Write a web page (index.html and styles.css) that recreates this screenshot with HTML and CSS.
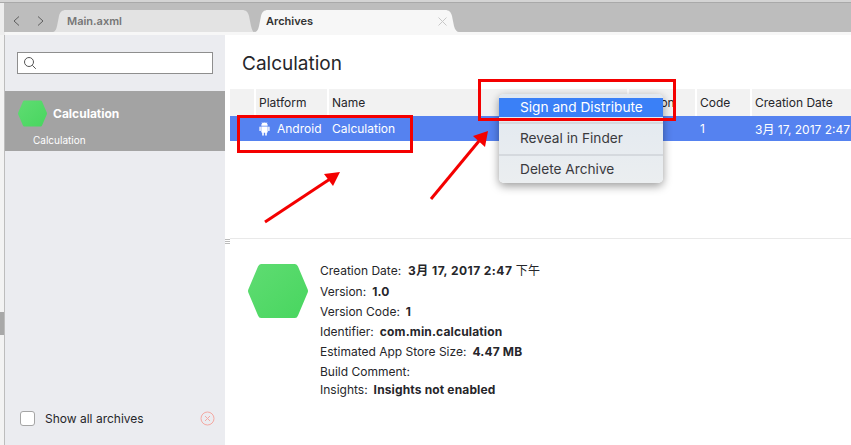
FILE: index.html
```html
<!DOCTYPE html>
<html>
<head>
<meta charset="utf-8">
<link rel="stylesheet" href="styles.css">
</head>
<body>
<div class="app">
  <div class="topline"></div>
  <div class="tabbar">
    <div class="nav">
      <svg width="12" height="12" viewBox="0 0 12 12"><path d="M8 1.500 3 6 8 10.500" class="chev"/></svg>
      <svg width="12" height="12" viewBox="0 0 12 12"><path d="M4 1.500 9 6 4 10.500" class="chev"/></svg>
    </div>
    <div class="tab tab-off">Main.axml</div>
    <div class="tab tab-on"><span>Archives</span>
      <svg width="9" height="9" viewBox="0 0 9 9"><path d="M.5 .5 8.500 8.500M8.500 .5 .5 8.500" class="close"/></svg>
    </div>
  </div>
  <div class="strip"></div>
  <div class="body">
    <div class="gutter"><div class="thumb"></div></div>
    <aside class="sidebar">
      <div class="search">
        <svg width="14" height="14" viewBox="0 0 14 14"><circle cx="6" cy="6" r="4.500" class="lens"/><path d="M9.300 9.300 12.800 12.800" class="lens"/></svg>
      </div>
      <div class="selected">
        <div class="sel-top">
          <svg class="hex-small" width="29" height="27" viewBox="0 0 60 54"><defs><linearGradient id="g1" x1="0" y1="0" x2="1" y2="1"><stop offset="0" stop-color="#5fdc72"/><stop offset="1" stop-color="#48d65f"/></linearGradient></defs><path d="M13 0H47Q49 0 50 2.500L59.500 25Q60.500 27 59.500 29L50 51.500Q49 54 47 54H13Q11 54 10 51.500L.5 29Q-.5 27 .5 25L10 2.500Q11 0 13 0Z" fill="url(#g1)"/></svg>
          <span class="sel-name">Calculation</span>
        </div>
        <div class="sel-sub">Calculation</div>
      </div>
      <div class="side-foot">
        <div class="check"></div>
        <span class="show">Show all archives</span>
        <svg class="del" width="15" height="15" viewBox="0 0 15 15"><circle cx="7.500" cy="7.500" r="6.500" class="del-s"/><path d="M5 5 10 10M10 5 5 10" class="del-s"/></svg>
      </div>
    </aside>
    <main class="main">
      <h1 class="title">Calculation</h1>
      <div class="table">
        <div class="thead">
          <div class="c c0"></div>
          <div class="c c1">Platform</div>
          <div class="c c2">Name</div>
          <div class="c c3">Version</div>
          <div class="c c4">Code</div>
          <div class="c c5">Creation Date</div>
        </div>
        <div class="trow">
          <div class="c c0"></div>
          <div class="c c1 plat">
            <svg width="11" height="15" viewBox="0 0 11 15"><path fill="#fff" d="M2.300 4.800A3.200 3.200 0 0 1 8.700 4.800ZM2.300 5.400H8.700V11Q8.700 11.800 7.800 11.800V14Q7.800 14.800 7 14.800T6.200 14V11.800H4.800V14Q4.800 14.800 4 14.800T3.200 14V11.800Q2.300 11.800 2.300 11ZM1.100 5.400Q1.800 5.400 1.800 6.100V9.400Q1.800 10.100 1.100 10.100T.4 9.400V6.100Q.4 5.400 1.100 5.400ZM9.900 5.400Q10.600 5.400 10.600 6.100V9.400Q10.600 10.100 9.900 10.100T9.200 9.400V6.100Q9.200 5.400 9.900 5.400Z"/><path d="M3.700 2.600 3 1.300M7.300 2.600 8 1.300" stroke="#fff" stroke-width=".6"/></svg>
            <span>Android</span>
          </div>
          <div class="c c2">Calculation</div>
          <div class="c c3"></div>
          <div class="c c4">1</div>
          <div class="c c5">3月 17, 2017 2:47 下午</div>
        </div>
      </div>
      <div class="details">
        <svg class="hex-big" width="60" height="54" viewBox="0 0 60 54"><defs><linearGradient id="g2" x1="0" y1="0" x2="1" y2="1"><stop offset="0" stop-color="#5fdc72"/><stop offset="1" stop-color="#48d65f"/></linearGradient></defs><path d="M13 0H47Q49 0 50 2.500L59.500 25Q60.500 27 59.500 29L50 51.500Q49 54 47 54H13Q11 54 10 51.500L.5 29Q-.5 27 .5 25L10 2.500Q11 0 13 0Z" fill="url(#g2)"/></svg>
        <div class="info">
          <div class="line l1">Creation Date:<b>3月 17, 2017 2:47 <i>下午</i></b></div>
          <div class="line l2">Version:<b>1.0</b></div>
          <div class="line">Version Code:<b>1</b></div>
          <div class="line">Identifier:<b>com.min.calculation</b></div>
          <div class="line">Estimated App Store Size:<b>4.47 MB</b></div>
          <div class="line">Build Comment:</div>
          <div class="line l7">Insights:<b>Insights not enabled</b></div>
        </div>
      </div>
    </main>
  </div>
  <div class="splitter"></div>
  <div class="menu">
    <div class="mi mi-on">Sign and Distribute</div>
    <div class="msep sep1"></div>
    <div class="mi">Reveal in Finder</div>
    <div class="msep sep2"></div>
    <div class="mi">Delete Archive</div>
  </div>
  <div class="redbox rb1"></div>
  <div class="redbox rb2"></div>
  <svg class="arrows" width="851" height="445" viewBox="0 0 851 445">
    <path d="M265 222 330 179" class="arrow"/><path d="M340 172 324 174 333 186Z" fill="#f40000"/>
    <path d="M431 199 479 141" class="arrow"/><path d="M488 131 473 136 485 147Z" fill="#f40000"/>
  </svg>
</div>
</body>
</html>
```
FILE: styles.css
```css
* { box-sizing: border-box; }
html, body { margin: 0; padding: 0; }
body { font-family: "Inter", "Noto Sans CJK SC", sans-serif; color: #26262a; background: #fff; }
.app { position: relative; width: 851px; height: 445px; overflow: hidden; display: flex; flex-direction: column; }
.topline { height: 3px; background: #d4d4d4; border-bottom: 1px solid #a9a9a9; flex: none; }
.tabbar { height: 29px; flex: none; background: #bdbdbd; display: flex; align-items: flex-end; padding-left: 5px; border-left: 4px solid #ededed; }
.strip { height: 3px; flex: none; background: #f7f7f7; border-left: 5px solid #ededed; }
.nav { width: 43px; height: 22px; display: flex; gap: 11px; align-items: center; padding-left: 2px; flex: none; }
.chev { fill: none; stroke: #5f5f5f; stroke-width: 1; }
.tab { height: 22px; font-size: 11px; font-weight: 600; display: flex; align-items: center; flex: none; }
.tab-off { width: 202px; padding-left: 15px; background: #e3e3e3; color: #767676; clip-path: path("M0 22C3 22 4 20 5 16L7 6C8 2 10 0 14 0H190C194 0 196 2 197 6L199 16C200 20 201 22 202 22Z"); }
.tab-on { width: 205px; padding: 0 12px 0 12px; background: #f7f7f7; color: #333; justify-content: space-between; clip-path: path("M0 22C3 22 4 20 5 16L7 6C8 2 10 0 14 0H191C195 0 197 2 198 6L200 16C201 20 203 22 205 22Z"); }
.close { stroke: #c8c8c8; stroke-width: 1; fill: none; }
.body { flex: 1; display: flex; min-height: 0; }
.gutter { width: 5px; flex: none; background: #f3f3f3; border-right: 1px solid #bdbdbd; padding-top: 277px; }
.thumb { height: 23px; background: #a8a8a8; }
.sidebar { width: 220px; flex: none; background: #ebecf0; display: flex; flex-direction: column; padding-top: 17px; }
.search { width: 196px; height: 22px; margin-left: 12px; background: #fff; border: 1px solid #8e8e8e; display: flex; align-items: center; padding-left: 5px; flex: none; }
.lens { fill: none; stroke: #555; stroke-width: 1; }
.selected { margin-top: 17px; height: 60px; background: #a3a3a3; color: #fff; padding: 9px 0 0 13px; flex: none; }
.sel-top { display: flex; align-items: center; gap: 6px; }
.sel-name { font-size: 12px; font-weight: 700; }
.sel-sub { font-size: 10px; margin: 7px 0 0 15px; line-height: 12px; }
.side-foot { margin-top: auto; height: 53px; display: flex; align-items: center; padding: 0 10px 0 15px; }
.check { width: 15px; height: 15px; background: #fff; border: 1px solid #a5a5a5; border-radius: 3px; flex: none; }
.show { font-size: 12px; margin-left: 10px; }
.del { margin-left: auto; }
.del-s { fill: none; stroke: #f4a9a3; stroke-width: 1; }
.main { flex: 1; min-width: 0; display: flex; flex-direction: column; background: #fff; }
.title { margin: 0; padding: 18px 0 0 17px; height: 54px; font-size: 19px; font-weight: 400; line-height: 22px; color: #26262a; }
.table { margin-left: 5px; height: 150px; border-bottom: 1px solid #e9e9e9; flex: none; }
.thead { height: 27px; background: #f2f2f2; display: flex; align-items: center; font-size: 12px; }
.trow { height: 25px; background: #5582f0; color: #fff; display: flex; align-items: center; font-size: 12px; }
.c { padding-left: 3px; flex: none; white-space: nowrap; overflow: hidden; border-left: 2px solid transparent; }
.thead .c { height: 27px; line-height: 27px; border-left-color: #fff; }
.thead .c0 { border-left-color: transparent; }
.c0 { width: 24px; }
.c1 { width: 73px; }
.c2 { width: 300px; }
.c3 { width: 68px; }
.c4 { width: 55px; }
.c5 { flex: 1; min-width: 0; }
.plat { display: flex; align-items: center; gap: 7px; }
.details { flex: 1; display: flex; padding: 25px 0 0 23px; }
.hex-big { flex: none; }
.info { margin: -3px 0 0 12px; font-size: 12px; line-height: 20px; }
.line b { font-weight: 700; margin-left: 6px; letter-spacing: .15px; }
.line i { font-style: normal; font-weight: 400; }
.l1 b { margin-left: 7px; letter-spacing: .45px; }
.l2 { margin-top: 1px; }
.l7 { margin-top: -2px; }
.splitter { position: absolute; left: 225px; top: 239px; width: 5px; height: 6px; background: repeating-linear-gradient(#bbb 0 1px, transparent 1px 2px); }
.menu { position: absolute; left: 499px; top: 94px; width: 164px; height: 89px; border-radius: 5px; background: linear-gradient(#e1e8f0, #ebeef0); box-shadow: 0 3px 10px rgba(0,0,0,.4); padding-top: 4px; color: #3a3a3e; font-size: 13.700px; }
.mi { height: 24px; line-height: 24px; padding-left: 21px; }
.mi-on { height: 19px; line-height: 19px; background: #3a80f7; color: #fff; }
.msep { height: 2px; background: #d5d9de; }
.sep1 { margin: 5px 0 2px; }
.sep2 { margin: 4px 0 1px; }
.redbox { position: absolute; border: 3px solid #f40000; }
.rb1 { left: 237px; top: 115px; width: 176px; height: 38px; }
.rb2 { left: 478px; top: 79px; width: 198px; height: 42px; }
.arrows { position: absolute; left: 0; top: 0; }
.arrow { stroke: #f40000; stroke-width: 3; fill: none; }
```
